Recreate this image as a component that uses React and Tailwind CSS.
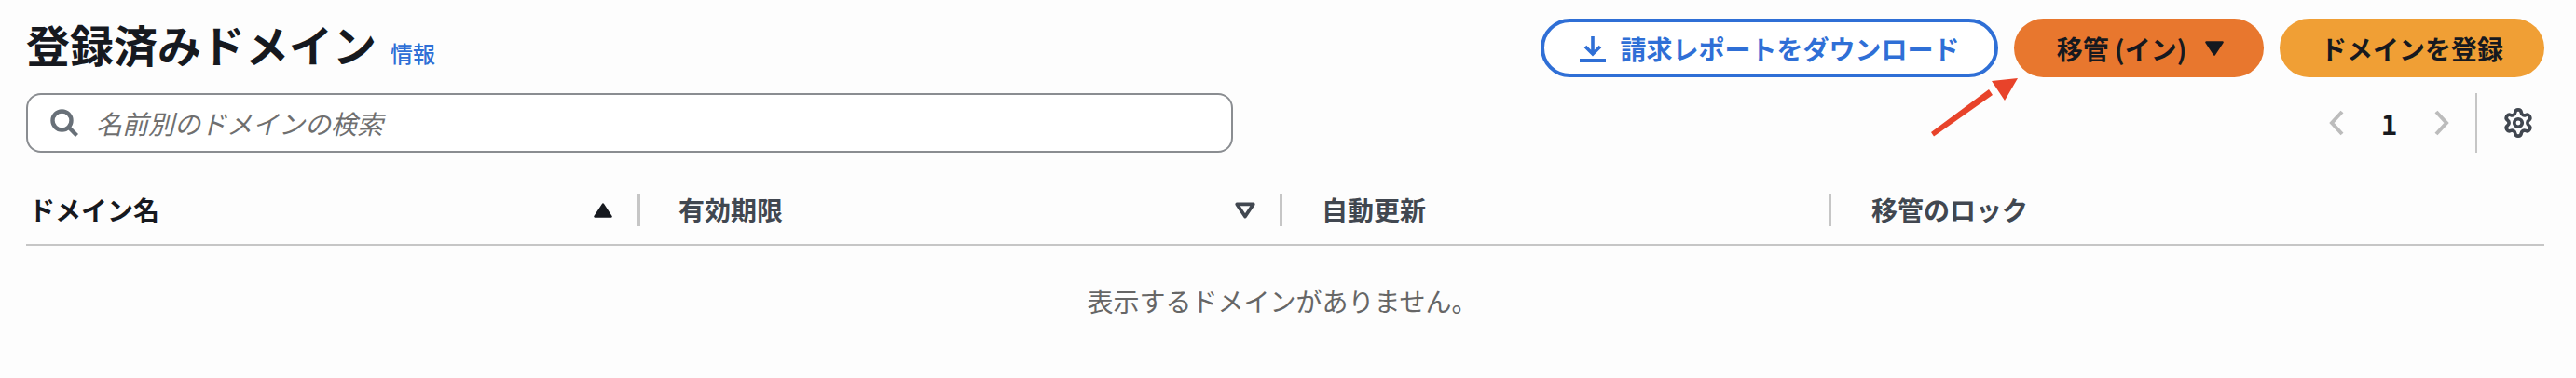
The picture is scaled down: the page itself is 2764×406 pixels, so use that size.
import React from 'react';
import { Settings } from 'lucide-react';

const font = { fontFamily: '"Noto Sans CJK JP", "Liberation Sans", sans-serif' };

const columns = [
  { label: 'ドメイン名', width: 'w-[659px]', pad: 'pl-[3px]', text: 'text-[#16191f]', sort: 'up' },
  { label: '有効期限', width: 'w-[689px]', pad: 'pl-[41px]', text: 'text-[#414750]', sort: 'down' },
  { label: '自動更新', width: 'w-[589px]', pad: 'pl-[42px]', text: 'text-[#414750]' },
  { label: '移管のロック', width: 'flex-1', pad: 'pl-[43px]', text: 'text-[#414750]' },
];

const Triangle = ({ className = '', hollow = false, flip = false }) => (
  <svg viewBox="0 0 22 18" className={className}>
    <path
      d={flip ? 'M3 3h16L11 15z' : 'M11 3l8 12H3z'}
      fill={hollow ? 'none' : 'currentColor'}
      stroke="currentColor"
      strokeWidth={hollow ? 3.5 : 2}
      strokeLinejoin="round"
    />
  </svg>
);

const App = () => {
  return (
    <div style={font} className="relative h-[406px] bg-[#fdfdfd] pl-[28px] pr-[34px] pt-[20px] overflow-hidden">
      {/* Title and actions */}
      <div className="flex justify-between h-[63px]">
        <div className="flex items-baseline gap-[15px]">
          <h1 className="text-[47px] leading-[54px] font-bold text-[#16191f]">登録済みドメイン</h1>
          <a className="text-[24px] font-medium text-[#2f6fd6]">情報</a>
        </div>
        <div className="flex gap-[17px]">
          <button className="flex items-center justify-center w-[491px] h-[63px] rounded-full border-[4px] border-[#2f6fd6] text-[#2f6fd6] text-[28px] font-bold gap-[14px] bg-white">
            <svg viewBox="0 0 30 30" className="w-[30px] h-[30px]" fill="none" stroke="currentColor" strokeWidth="3.6">
              <path d="M15 2v18M7 13l8 8 8-8" />
              <path d="M1 28h28" strokeWidth="4" />
            </svg>
            請求レポートをダウンロード
          </button>
          <button className="flex items-center justify-center w-[268px] h-[63px] pl-[5px] rounded-full bg-[#e8772e] text-[#16191f] text-[28px] font-bold gap-[18px]">
            移管 (イン)
            <Triangle flip className="w-[24px] h-[20px]" />
          </button>
          <button className="flex items-center justify-center w-[284px] h-[63px] rounded-full bg-[#f09f35] text-[#16191f] text-[28px] font-bold">
            ドメインを登録
          </button>
        </div>
      </div>

      {/* Search and pagination */}
      <div className="flex justify-between items-center mt-[17px] h-[64px] pr-[11px]">
        <div className="flex items-center gap-[19px] w-[1295px] h-[64px] rounded-[16px] border-2 border-[#8a8d91] bg-white pl-[24px]">
          <svg viewBox="0 0 30 30" className="w-[30px] h-[30px] text-[#687078]" fill="none" stroke="currentColor" strokeWidth="4.4">
            <circle cx="12.5" cy="12.5" r="10" />
            <path d="M20 20l8.5 8.5" />
          </svg>
          <input
            readOnly
            placeholder="名前別のドメインの検索"
            className="flex-1 text-[28px] outline-none placeholder:italic placeholder:text-[#6f6f6f]"
          />
        </div>
        <div className="flex items-center h-[64px]">
          <svg viewBox="0 0 16 28" className="w-[16px] h-[28px] text-[#bcbcbc]" fill="none" stroke="currentColor" strokeWidth="4">
            <path d="M14 2L3 14l11 12" />
          </svg>
          <span className="w-[97px] text-center text-[30px] font-bold text-[#16191f]">1</span>
          <svg viewBox="0 0 16 28" className="w-[16px] h-[28px] text-[#bcbcbc]" fill="none" stroke="currentColor" strokeWidth="4">
            <path d="M2 2l11 12L2 26" />
          </svg>
          <div className="w-[2px] h-[64px] bg-[#c6c6c6] ml-[28px] mr-[27px]" />
          <Settings className="w-[34px] h-[34px] text-[#414750]" strokeWidth={2.6} />
        </div>
      </div>

      {/* Table header */}
      <div className="flex items-center h-[100px] pt-[44px] pb-[19px] border-b-2 border-[#c6c6c6]">
        {columns.map((col, i) => (
          <div key={col.label} className={`${col.width} ${col.pad} flex items-center justify-between h-[35px] ${i < 3 ? 'border-r-[3px] border-[#c6c6c6]' : ''}`}>
            <span className={`text-[28px] font-bold leading-[35px] ${col.text}`}>{col.label}</span>
            {col.sort === 'up' && <Triangle className="w-[24px] h-[20px] mr-[25px] text-[#16191f]" />}
            {col.sort === 'down' && <Triangle flip hollow className="w-[24px] h-[20px] mr-[25px] text-[#414750]" />}
          </div>
        ))}
      </div>

      {/* Empty state */}
      <p className="mt-[39px] text-center text-[28px] leading-[40px] text-[#666666] pr-[6px]">表示するドメインがありません。</p>

      {/* Red annotation arrow */}
      <svg viewBox="0 0 100 70" className="absolute left-[2070px] top-[80px] w-[100px] h-[70px] text-[#e8432a]" fill="currentColor">
        <path d="M2 62l3 4.5 L68 22l-4-6z" />
        <path d="M95 4L67 7 81 28z" />
      </svg>
    </div>
  );
};

export default App;
